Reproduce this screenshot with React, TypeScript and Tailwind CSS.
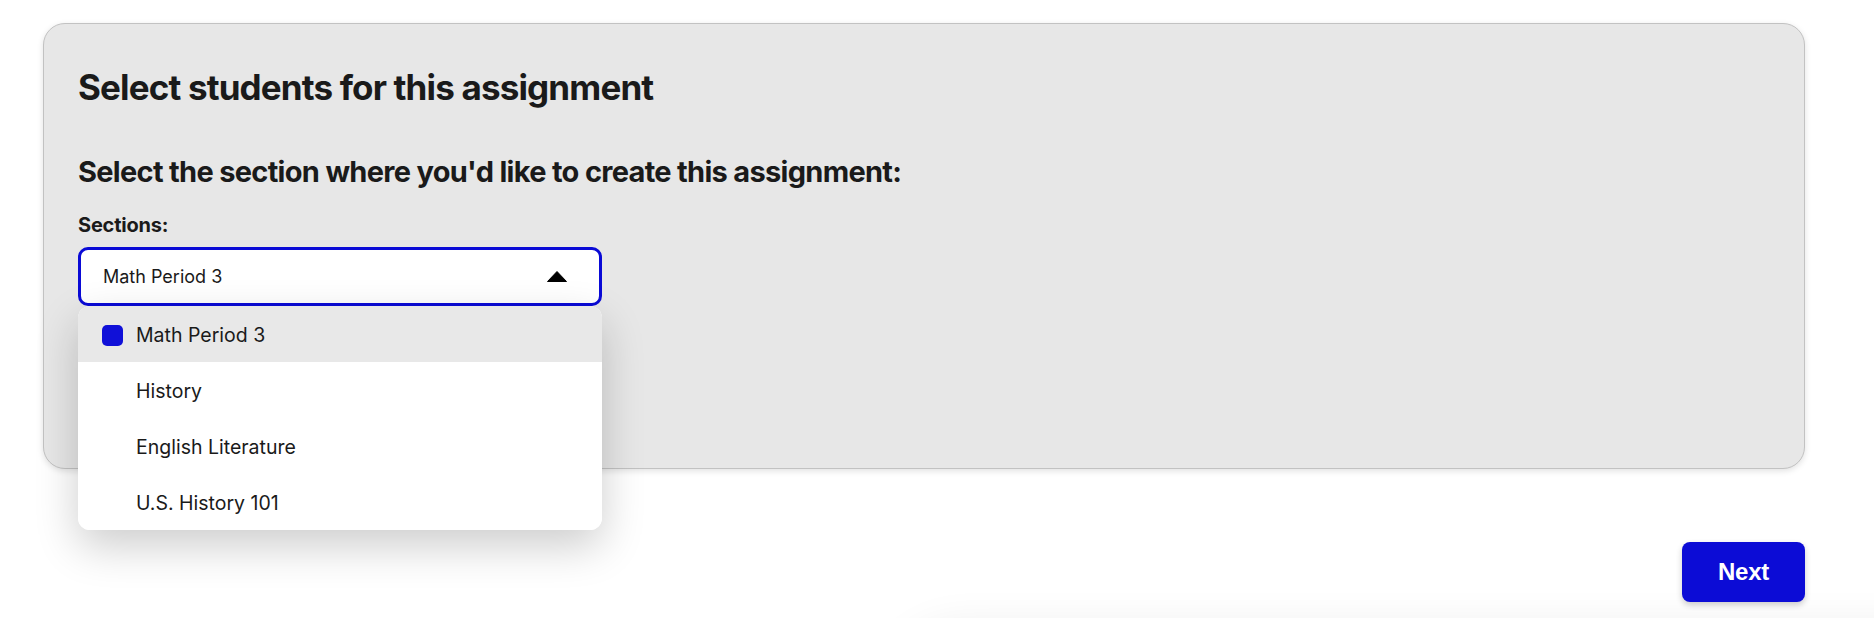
import React from "react";

const items = ["Math Period 3", "History", "English Literature", "U.S. History 101"];

export default function App() {
  return (
    <div className="h-[618px] w-full bg-white overflow-hidden" style={{ fontFamily: "Inter, 'Noto Sans', sans-serif" }}>
      <div className="ml-[43px] w-[1762px] pt-[23px]">
        <div className="relative rounded-[22px] border border-[#c2c2c2] bg-[#e7e7e7] pl-[34px] pt-[43px] pb-[162px] shadow-[0_2px_6px_rgba(0,0,0,0.12)]">
          <h1 className="text-[35px] leading-[40px] font-bold text-[#1a1a1a] tracking-[-0.024em]">Select students for this assignment</h1>
          <h2 className="mt-[48px] text-[29px] leading-[34px] font-bold text-[#1a1a1a] tracking-[-0.024em]">Select the section where you'd like to create this assignment:</h2>
          <div className="mt-[24px] text-[20px] leading-[24px] font-bold text-[#1a1a1a] tracking-[-0.01em]">Sections:</div>
          <div className="relative mt-[10px] w-[524px]">
            <div className="flex h-[59px] items-center justify-between rounded-[10px] border-[3px] border-[#0a0ad6] bg-white pl-[22px] pr-[32px]">
              <span className="text-[18px] text-[#1a1a1a]">Math Period 3</span>
              <svg width="20" height="11" viewBox="0 0 20 11" aria-hidden="true">
                <path d="M10 0.5 L19.5 10.5 L0.5 10.5 Z" fill="#000" strokeLinejoin="round" stroke="#000" strokeWidth="1" />
              </svg>
            </div>
            <div className="absolute left-0 top-[59px] z-10 w-[524px] overflow-hidden rounded-[12px] bg-white shadow-[0_16px_44px_rgba(0,0,0,0.2)]">
              {items.map((it, i) => (
                <div key={it} className={`flex h-[56px] items-center pl-[24px] pt-[3px] ${i === 0 ? "bg-[#e8e8e8]" : "bg-white"}`}>
                  {i === 0 ? (
                    <span className="mr-[13px] h-[21px] w-[21px] rounded-[5px] bg-[#1010d8]" />
                  ) : (
                    <span className="mr-[13px] h-[21px] w-[21px]" />
                  )}
                  <span className="text-[19.5px] text-[#1a1a1a]">{it}</span>
                </div>
              ))}
            </div>
          </div>
        </div>
        <div className="mt-[73px] flex justify-end">
          <button className="h-[60px] w-[123px] rounded-[8px] bg-[#0c0cd6] text-[24px] font-bold text-white tracking-[-0.01em] shadow-[0_3px_6px_rgba(0,0,0,0.2)]" style={{ fontFamily: "'Liberation Sans', Arial, sans-serif" }}>
            Next
          </button>
        </div>
        <div className="ml-[840px] mt-[22px] h-[80px] w-[1100px] rounded-tl-[300px] bg-white shadow-[0_0_40px_rgba(0,0,0,0.07)]" />
      </div>
    </div>
  );
}
